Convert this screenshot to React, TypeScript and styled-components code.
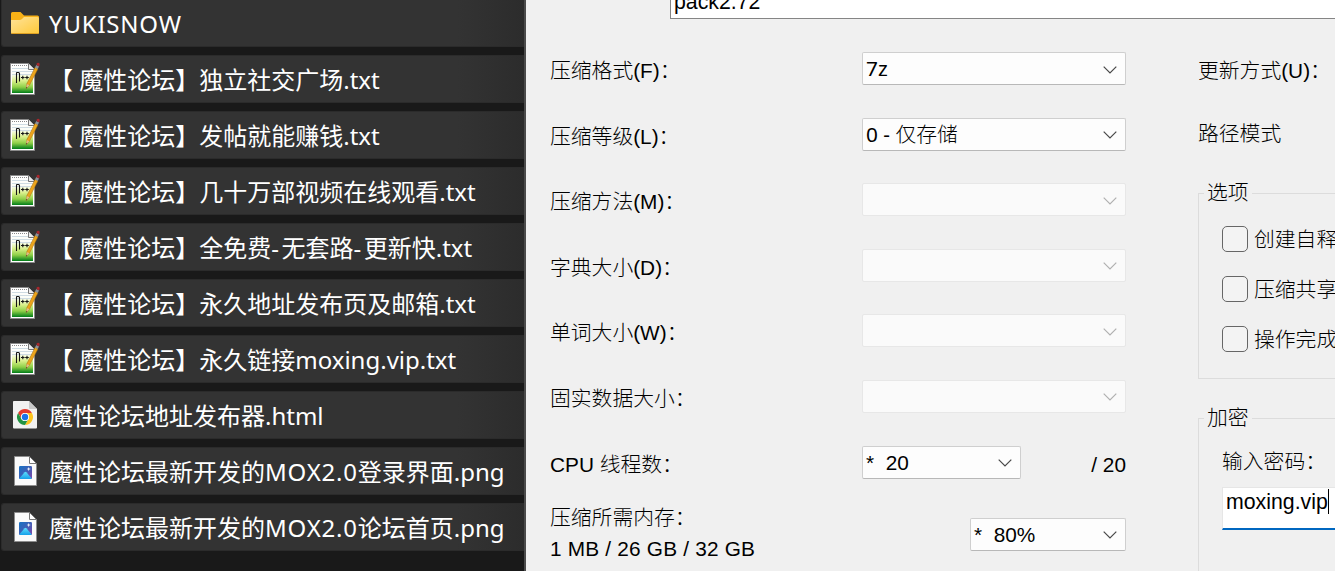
import styled, { createGlobalStyle, css } from "styled-components";

type IconKind = "folder" | "notepad" | "chrome" | "image";

interface FileItem {
  icon: IconKind;
  name: string;
}

const files: FileItem[] = [
  { icon: "folder", name: "YUKISNOW" },
  { icon: "notepad", name: "【 魔性论坛】独立社交广场.txt" },
  { icon: "notepad", name: "【 魔性论坛】发帖就能赚钱.txt" },
  { icon: "notepad", name: "【 魔性论坛】几十万部视频在线观看.txt" },
  { icon: "notepad", name: "【 魔性论坛】全免费-无套路-更新快.txt" },
  { icon: "notepad", name: "【 魔性论坛】永久地址发布页及邮箱.txt" },
  { icon: "notepad", name: "【 魔性论坛】永久链接moxing.vip.txt" },
  { icon: "chrome", name: "魔性论坛地址发布器.html" },
  { icon: "image", name: "魔性论坛最新开发的MOX2.0登录界面.png" },
  { icon: "image", name: "魔性论坛最新开发的MOX2.0论坛首页.png" },
];

interface Field {
  label: string;
  value?: string;
  hint?: string;
}

const fields: Field[] = [
  { label: "压缩格式(F)：", value: "7z" },
  { label: "压缩等级(L)：", value: "0 - ", hint: "仅存储" },
  { label: "压缩方法(M)：" },
  { label: "字典大小(D)：" },
  { label: "单词大小(W)：" },
  { label: "固实数据大小：" },
];

const options = ["创建自释", "压缩共享", "操作完成"];

const FolderIcon = () => (
  <svg width="28" height="24" viewBox="0 0 28 24">
    <defs>
      <linearGradient id="folder" x1="0" y1="0" x2="1" y2="1">
        <stop offset="0" stopColor="#ffe39a" />
        <stop offset="1" stopColor="#ffc937" />
      </linearGradient>
    </defs>
    <path d="M0 2.5Q0 1 1.5 1H9.5L13 4.5H26.5Q28 4.5 28 6V12H0Z" fill="#f8b117" />
    <path d="M0 9H8.5Q10 9 11 8L13 6H26.5Q28 6 28 7.5V21.5Q28 23 26.5 23H1.5Q0 23 0 21.5Z" fill="url(#folder)" />
    <path d="M.5 22.5H27.5" stroke="#dea022" />
  </svg>
);

const NotepadIcon = () => (
  <svg width="30" height="34" viewBox="0 0 30 34">
    <defs>
      <linearGradient id="note" x1="0" y1="0" x2="0" y2="1">
        <stop offset="0" stopColor="#fff" />
        <stop offset=".3" stopColor="#fbfdf6" />
        <stop offset=".55" stopColor="#d9f08a" />
        <stop offset=".78" stopColor="#8fd048" />
        <stop offset="1" stopColor="#007d18" />
      </linearGradient>
    </defs>
    <path d="M.5 1.5H18.5L24.5 7.5V32.5H.5Z" fill="#fff" stroke="#8a8a8a" />
    <path d="M2 4H18L23 9V31H2Z" fill="url(#note)" />
    <path d="M2 3.5H18" stroke="#8a8a8a" strokeDasharray="1 1" />
    <path d="M2 6.5H18M2 9.5H23M2 12.5H23" stroke="#cfdce3" />
    <path d="M18.5 1.5V7.5H24.5" fill="#ececec" stroke="#777" />
    <path d="M6.5 21V11Q6.5 10.5 7 10.5H8.5Q9.5 10.5 9.5 11.5V19.5" fill="none" stroke="#161616" strokeWidth="1.1" />
    <path d="M11 15.5H14.6M12.8 13.7V17.3M15.2 15.5H18.8M17 13.7V17.3" stroke="#161616" strokeWidth="1.1" />
    <path d="M25.2 5.2L28 6.8L19.4 23.3L16.3 26.5L16.7 22Z" fill="#eba41c" stroke="#a56a10" strokeWidth=".5" />
    <path d="M16.7 22L19.4 23.3L16.3 26.5Z" fill="#d9bd8c" />
    <path d="M16.4 25L17.3 25.5L16.2 26.7Z" fill="#222" />
    <path d="M26.3 3L29 4.6L27.8 7L25 5.5Z" fill="#8b8f97" />
    <path d="M26.8 1.3Q28.5.2 29.7 1.8L29.3 4.4L26.5 3Z" fill="#a8272c" />
  </svg>
);

const ChromeIcon = () => (
  <svg width="24" height="28" viewBox="0 0 24 28">
    <path d="M.8 0H16L24 8V26.5Q24 27.5 23 27.5H1Q0 27.5 0 26.5V.8Q0 0 .8 0Z" fill="#f1f1f1" />
    <path d="M16 0L24 8H17Q16 8 16 7Z" fill="#c9c9c9" />
    <circle cx="12" cy="16" r="8" fill="#fff" />
    <path d="M12 12H18.93A8 8 0 0 0 5.07 12L8.54 18A4 4 0 0 1 12 12Z" fill="#e33b2e" />
    <path d="M15.46 18L12 24A8 8 0 0 0 18.93 12H12A4 4 0 0 1 15.46 18Z" fill="#fcc31e" />
    <path d="M8.54 18L5.07 12A8 8 0 0 0 12 24L15.46 18A4 4 0 0 1 8.54 18Z" fill="#229342" />
    <circle cx="12" cy="16" r="4" fill="#fff" />
    <circle cx="12" cy="16" r="3.2" fill="#1a73e8" />
  </svg>
);

const ImageIcon = () => (
  <svg width="23" height="30" viewBox="0 0 23 30">
    <defs>
      <linearGradient id="sky" x1="0" y1="0" x2="1" y2="1">
        <stop offset="0" stopColor="#1572c4" />
        <stop offset=".5" stopColor="#3f5fb6" />
        <stop offset="1" stopColor="#8146a8" />
      </linearGradient>
      <linearGradient id="hill" x1="0" y1="0" x2="0" y2="1">
        <stop offset="0" stopColor="#5fe0fd" />
        <stop offset="1" stopColor="#159fe9" />
      </linearGradient>
    </defs>
    <path d="M.5.5H15.5L22.5 7.5V29.5H.5Z" fill="#fafafa" stroke="#8d8d8d" />
    <path d="M15.5.5V7.5H22.5Z" fill="#fff" stroke="#777" />
    <rect x="5" y="10" width="13" height="13" rx="1.3" fill="url(#sky)" />
    <path d="M5.2 22.6L10.6 16.2Q11.5 15.3 12.4 16.2L17.8 22.6Q17.4 23 16.7 23H6.3Q5.6 23 5.2 22.6Z" fill="url(#hill)" />
    <path d="M14.7 11L15.2 12.6L16.8 13.1L15.2 13.6L14.7 15.2L14.2 13.6L12.6 13.1L14.2 12.6Z" fill="#fff" />
  </svg>
);

const icons = {
  folder: FolderIcon,
  notepad: NotepadIcon,
  chrome: ChromeIcon,
  image: ImageIcon,
};

interface ComboProps {
  width: number;
  value?: string;
  hint?: string;
  ui?: boolean;
}

const Combo = ({ width, value, hint, ui }: ComboProps) => (
  <ComboBox $width={width} $disabled={!value}>
    <ComboText $ui={ui}>
      <span>{value}</span>
      {hint}
    </ComboText>
    <svg width="14" height="8" viewBox="0 0 14 8">
      <path
        d="M.7.7L7 7L13.3.7"
        fill="none"
        stroke={value ? "#484848" : "#b0b0b0"}
        strokeWidth="1.2"
      />
    </svg>
  </ComboBox>
);

const App = () => {
  return (
    <Screen>
      <GlobalStyle />
      <FileList>
        {files.map((file) => {
          const Icon = icons[file.icon];
          return (
            <FileRow key={file.name}>
              <IconSlot>
                <Icon />
              </IconSlot>
              <FileName>
                {/* capitals and hyphens are set a little wider */}
                {file.name.split(/([A-Z][A-Z0-9.]+|-)/).map((part, i) =>
                  i % 2 ? (
                    <Wide key={i} $spacing={part === "-" ? 2.5 : 0.8}>
                      {part}
                    </Wide>
                  ) : (
                    part
                  )
                )}
              </FileName>
            </FileRow>
          );
        })}
      </FileList>
      <Dialog>
        <ArchiveInput>pack2.72</ArchiveInput>
        <Columns>
          <Settings>
            {fields.map((field) => (
              <SettingRow key={field.label}>
                <Label>{field.label}</Label>
                <Combo width={264} value={field.value} hint={field.hint} ui />
              </SettingRow>
            ))}
            <SettingRow>
              <Label>CPU 线程数：</Label>
              <ThreadGroup>
                <Combo width={159} value="*  20" />
                <Label>/ 20</Label>
              </ThreadGroup>
            </SettingRow>
            <MemoryRow>
              <MemoryText>
                <span>压缩所需内存：</span>
                <Wide $spacing={0.2}>1 MB / 26 GB / 32 GB</Wide>
              </MemoryText>
              <Combo width={156} value="*  80%" />
            </MemoryRow>
          </Settings>
          <Side>
            <SideLabel>更新方式(U)：</SideLabel>
            <SideLabel>路径模式</SideLabel>
            <Group $height={201}>
              <legend>选项</legend>
              <Options>
                {options.map((option) => (
                  <Option key={option}>
                    <CheckBox />
                    <OptionText>{option}</OptionText>
                  </Option>
                ))}
              </Options>
            </Group>
            <Group $height={240}>
              <legend>加密</legend>
              <PasswordLabel>输入密码：</PasswordLabel>
              <PasswordInput>
                moxing.vip
                <Caret />
              </PasswordInput>
            </Group>
          </Side>
        </Columns>
      </Dialog>
    </Screen>
  );
};

const GlobalStyle = createGlobalStyle`
  * {
    box-sizing: border-box;
  }

  body {
    margin: 0;
    overflow: hidden;
  }
`;

const Screen = styled.div`
  display: flex;
  width: 1335px;
  height: 571px;
  overflow: hidden;
  white-space: pre;
`;

const FileList = styled.div`
  display: flex;
  flex-direction: column;
  flex: none;
  gap: 8px;
  width: 526px;
  height: 571px;
  padding-left: 1px;
  border-right: 2px solid #4b4b4b;
  background: #191919;
  font-family: "Noto Sans", "Noto Sans CJK SC", sans-serif;
  font-size: 24px;
  color: #fff;
`;

const FileRow = styled.div`
  display: flex;
  align-items: center;
  flex: none;
  height: 48px;
  border: 1px solid #2b2b2b;
  border-right: 0;
  border-radius: 3px 0 0 3px;
  background: linear-gradient(to right, #333 455px, #2c2c2c 100%);

  &:first-child {
    height: 47px;
    border-top: 0;
    border-radius: 0 0 0 3px;
  }
`;

const IconSlot = styled.div`
  display: flex;
  justify-content: center;
  flex: none;
  width: 46px;
`;

const FileName = styled.div`
  padding: 2px 0 0 1px;
  line-height: 44px;
`;

const Wide = styled.span<{ $spacing: number }>`
  letter-spacing: ${({ $spacing }) => $spacing}px;
`;

const Dialog = styled.div`
  flex: 1;
  min-width: 0;
  background: #f0f0f0;
  font-family: "Liberation Sans", "Noto Sans CJK SC", sans-serif;
  font-size: 20.8px;
  font-weight: 300;
  color: #000;
`;

const ArchiveInput = styled.div`
  display: flex;
  align-items: flex-end;
  height: 19px;
  margin-left: 144px;
  padding: 0 0 2px 3px;
  border: 1px solid #858585;
  border-width: 0 0 1px 1px;
  background: #fff;
  font-size: 21.3px;
  line-height: 28px;
`;

const Columns = styled.div`
  display: flex;
  padding: 33px 0 0 24px;
`;

const Settings = styled.div`
  flex: none;
  width: 576px;
`;

const SettingRow = styled.div`
  display: flex;
  justify-content: space-between;
  height: 65.6px;
`;

const Label = styled.div`
  padding-top: 2px;
  line-height: 33px;
`;

const ThreadGroup = styled.div`
  display: flex;
  justify-content: space-between;
  width: 264px;
`;

const MemoryRow = styled.div`
  display: flex;
  justify-content: space-between;
  padding-top: 6.8px;
`;

const MemoryText = styled.div`
  display: flex;
  flex-direction: column;
  margin-top: -16px;
  line-height: 31px;
`;

const ComboBox = styled.div<{ $width: number; $disabled: boolean }>`
  display: flex;
  align-items: center;
  justify-content: space-between;
  width: ${({ $width }) => $width}px;
  height: 33px;
  padding: 0 8px 0 3px;
  border: 1px solid #cfcfcf;
  border-bottom-color: #b8b8b8;
  border-radius: 2px;
  background: #fdfdfd;
  line-height: 31px;

  ${({ $disabled }) =>
    $disabled &&
    css`
      border-color: #e7e7e7;
      background: #fafafa;
    `}

  & svg {
    margin-top: 2px;
  }
`;

const ComboText = styled.div<{ $ui?: boolean }>`
  ${({ $ui }) =>
    $ui &&
    css`
      font-family: "Noto Sans", "Noto Sans CJK SC", sans-serif;
    `}

  & span {
    font-weight: 400;
  }
`;

const Side = styled.div`
  flex: 1;
  min-width: 0;
  padding-left: 72px;
`;

const SideLabel = styled.div`
  height: 63px;
  padding-top: 2px;
  line-height: 33px;
`;

const Group = styled.fieldset<{ $height: number }>`
  width: 300px;
  height: ${({ $height }) => $height}px;
  margin: 0 0 24px;
  padding: 0 0 0 23px;
  border: 1px solid #dcdcdc;

  & legend {
    margin-left: -18px;
    padding: 0 3px;
    line-height: 30px;
  }
`;

const Options = styled.div`
  display: flex;
  flex-direction: column;
  gap: 24px;
  padding-top: 18px;
`;

const Option = styled.div`
  display: flex;
  align-items: center;
  gap: 6px;
  height: 26px;
`;

const OptionText = styled.span`
  padding-bottom: 2px;
`;

const CheckBox = styled.span`
  width: 26px;
  height: 26px;
  border: 1.4px solid #666;
  border-radius: 5px;
  background: #f3f3f3;
`;

const PasswordLabel = styled.div`
  margin-top: 13px;
  line-height: 32px;
`;

const PasswordInput = styled.div`
  display: flex;
  height: 43px;
  margin-top: 9px;
  padding: 1px 0 0 3px;
  border: 1px solid #e6e6e6;
  border-bottom: 2px solid #0067c0;
  background: #fff;
  font-size: 21.3px;
  line-height: 26px;
`;

const Caret = styled.span`
  width: 1px;
  height: 25px;
  background: #000;
`;

export default App;
